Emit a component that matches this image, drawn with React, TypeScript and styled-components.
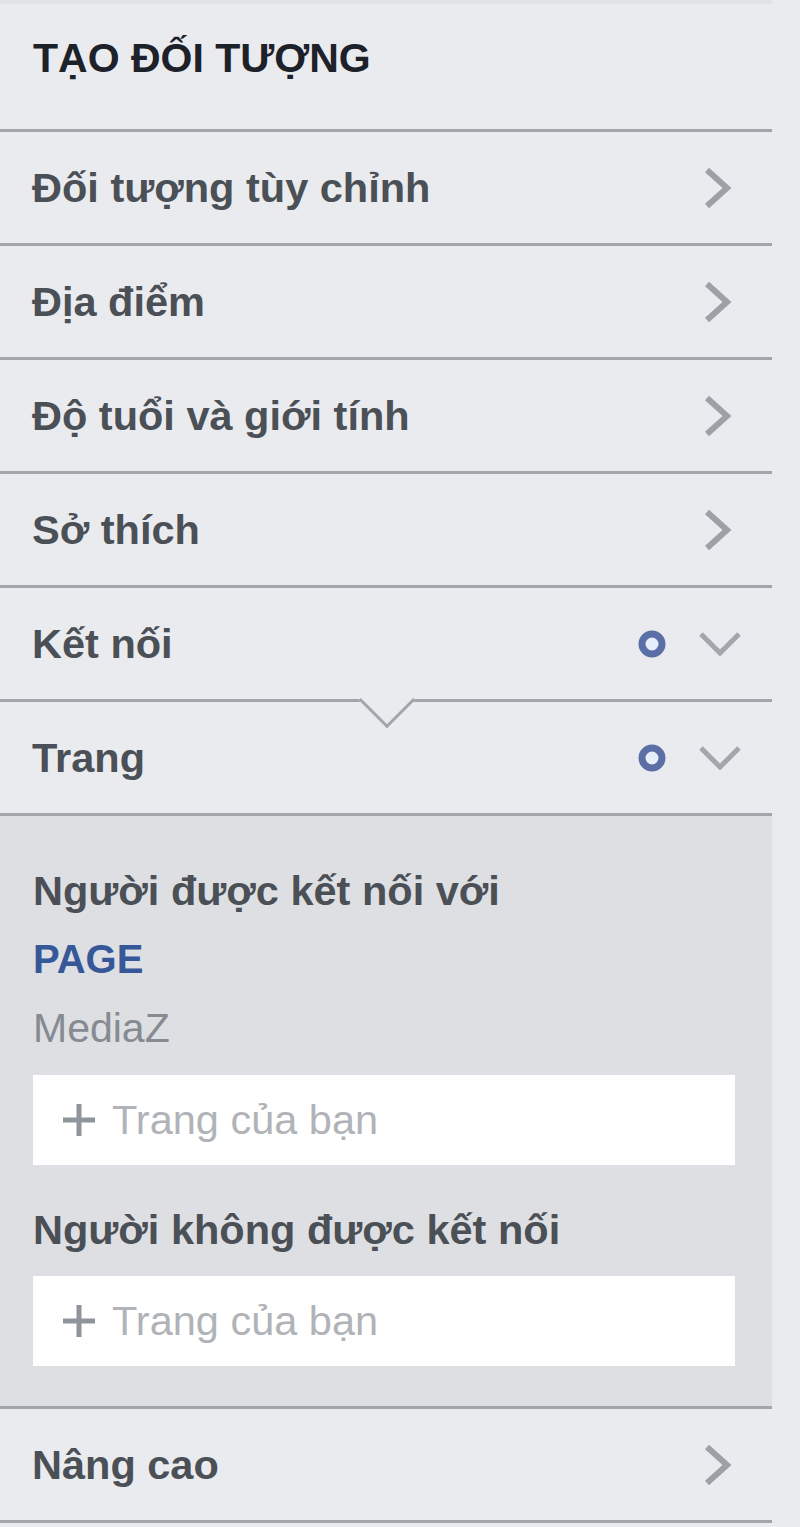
import React from "react";
import styled, { createGlobalStyle } from "styled-components";

const Global = createGlobalStyle`
  html, body {
    margin: 0;
    padding: 0;
    background: #e9ebee;
  }
  body {
    font-family: "Liberation Sans", Arial, sans-serif;
  }
`;

const LINE = "#a2a5aa";

const Panel = styled.div`
  width: 772px;
  background: #e9ebee;
  border-top: 4px solid #e1e3e6;
`;

const Header = styled.div`
  display: flex;
  align-items: center;
  padding: 0 0 13px 33px;
  box-sizing: border-box;
  height: 132px;
  margin-top: -4px;
  border-bottom: 3px solid ${LINE};
  font-size: 41px;
  font-weight: bold;
  color: #1d2129;
`;

const Row = styled.div<{ $notch?: boolean }>`
  position: relative;
  height: 111px;
  display: flex;
  align-items: center;
  padding: 0 37px 0 32px;
  border-bottom: 3px solid ${LINE};
  font-size: 41.5px;
  font-weight: bold;
  color: #4b4f56;

  ${(p) =>
    p.$notch &&
    `
    &::before {
      content: "";
      position: absolute;
      left: 367px;
      top: -22px;
      width: 40px;
      height: 40px;
      box-sizing: border-box;
      background: #e9ebee;
      border-right: 3px solid ${LINE};
      border-bottom: 3px solid ${LINE};
      transform: rotate(45deg);
    }
  `}
`;

const Label = styled.span`
  flex: 1;
`;

const Icons = styled.div`
  display: flex;
  align-items: center;
  gap: 31px;
  margin-right: -7px;
`;

const Expanded = styled.div`
  background: #dddfe2;
  border-bottom: 3px solid ${LINE};
  padding: 40px 37px 40px 33px;
`;

const SubLabel = styled.div<{ $gap?: number }>`
  line-height: 69px;
  font-size: 41.5px;
  font-weight: bold;
  color: #4b4f56;
  margin-top: ${(p) => p.$gap || 0}px;
`;

const PageTag = styled.div`
  line-height: 69px;
  font-size: 40px;
  font-weight: bold;
  color: #365899;
`;

const PageName = styled.div`
  line-height: 69px;
  font-size: 41px;
  color: #868a91;
`;

const InputBox = styled.div`
  margin-top: 12px;
  height: 90px;
  background: #fff;
  display: flex;
  align-items: center;
  gap: 15px;
  padding-left: 28px;
  font-size: 41.5px;
  color: #b0b3b8;
`;

const ChevronRight = () => (
  <svg width="34" height="44" viewBox="0 0 34 44">
    <polyline points="6,4 26,22 6,40" fill="none" stroke="#9da1a7" strokeWidth="6" />
  </svg>
);

const ChevronDown = () => (
  <svg width="44" height="30" viewBox="0 0 44 30">
    <polyline points="3,5 22,24 41,5" fill="none" stroke="#a3a7ad" strokeWidth="5" />
  </svg>
);

const Ring = () => (
  <svg width="30" height="30" viewBox="0 0 30 30">
    <circle cx="15" cy="15" r="10" fill="#e6eef9" stroke="#5b6fa6" strokeWidth="7" />
  </svg>
);

const Plus = () => (
  <svg width="36" height="36" viewBox="0 0 36 36">
    <path d="M18 2 V34 M2 18 H34" stroke="#90949c" strokeWidth="5" />
  </svg>
);

const rows = [
  { label: "Đối tượng tùy chỉnh", open: false },
  { label: "Địa điểm", open: false },
  { label: "Độ tuổi và giới tính", open: false },
  { label: "Sở thích", open: false },
  { label: "Kết nối", open: true },
];

export default function App() {
  return (
    <>
      <Global />
      <Panel>
        <Header>TẠO ĐỐI TƯỢNG</Header>
        {rows.map((r) => (
          <Row key={r.label}>
            <Label>{r.label}</Label>
            {r.open ? (
              <Icons>
                <Ring />
                <ChevronDown />
              </Icons>
            ) : (
              <ChevronRight />
            )}
          </Row>
        ))}
        <Row $notch>
          <Label>Trang</Label>
          <Icons>
            <Ring />
            <ChevronDown />
          </Icons>
        </Row>
        <Expanded>
          <SubLabel>Người được kết nối với</SubLabel>
          <PageTag>PAGE</PageTag>
          <PageName>MediaZ</PageName>
          <InputBox>
            <Plus />
            Trang của bạn
          </InputBox>
          <SubLabel $gap={30}>Người không được kết nối</SubLabel>
          <InputBox>
            <Plus />
            Trang của bạn
          </InputBox>
        </Expanded>
        <Row>
          <Label>Nâng cao</Label>
          <ChevronRight />
        </Row>
      </Panel>
    </>
  );
}
